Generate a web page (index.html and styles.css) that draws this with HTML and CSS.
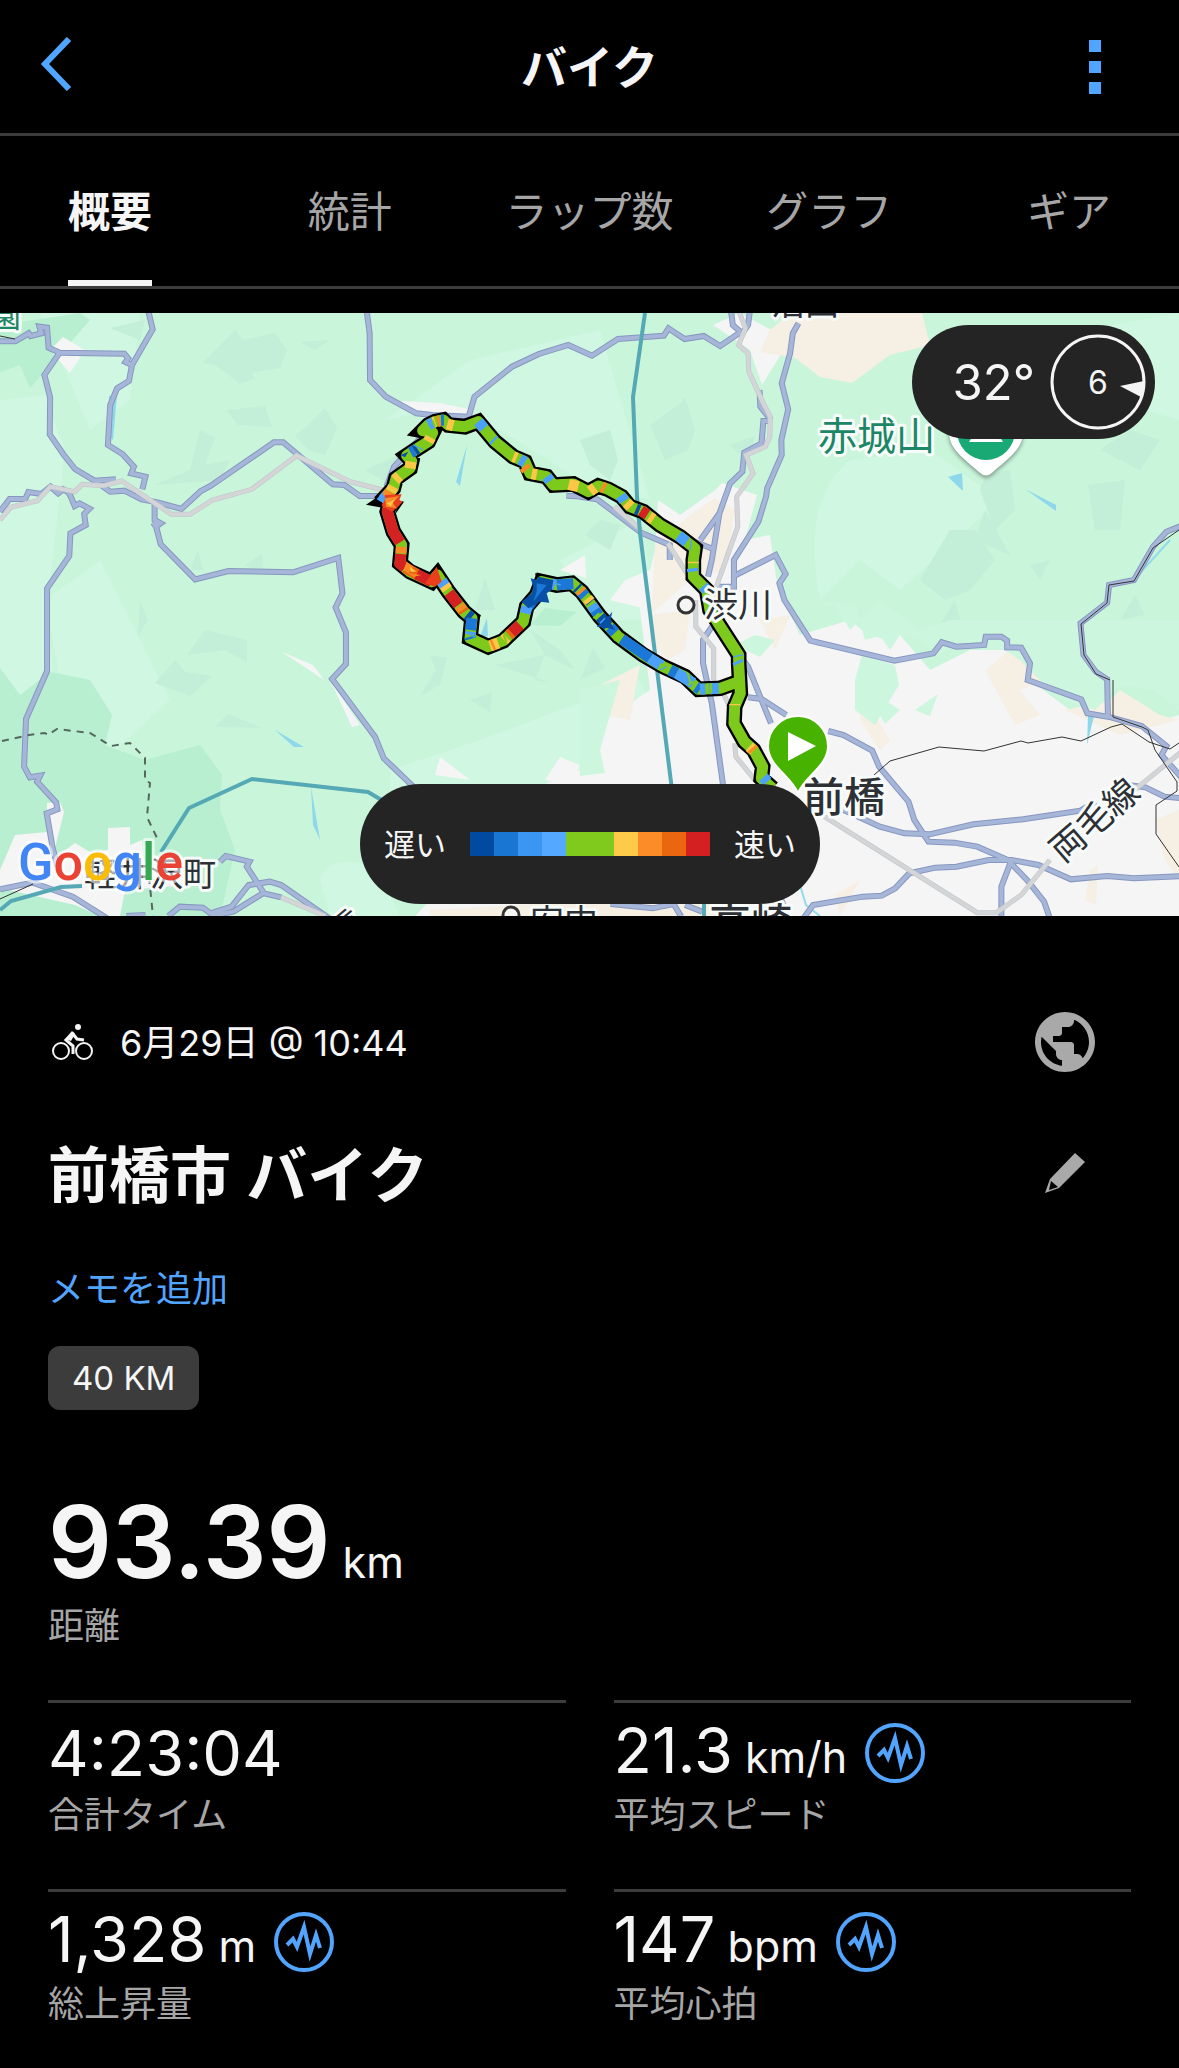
FILE: index.html
```html
<!DOCTYPE html>
<html lang="ja">
<head>
    <meta charset="UTF-8">
    <meta name="viewport" content="width=device-width, initial-scale=1.0">
    <title>バイク</title>
    <link rel="stylesheet" href="styles.css">
</head>
<body>
    <header class="top-bar">
        <button type="button" class="icon-button" aria-label="戻る">
            <svg width="32" height="54" viewBox="0 0 32 54"><path d="M29 2L5 27L29 52" fill="none" stroke="#52a5ff" stroke-width="6"/></svg>
        </button>
        <h1>バイク</h1>
        <button type="button" class="icon-button menu-button" aria-label="メニュー">
            <svg width="12" height="54" viewBox="0 0 12 54" fill="#52a5ff"><path d="M0 0h12v12H0zM0 21h12v12H0zM0 42h12v12H0z"/></svg>
        </button>
    </header>

    <nav class="tabs">
        <button type="button" class="tab active">概要</button>
        <button type="button" class="tab">統計</button>
        <button type="button" class="tab">ラップ数</button>
        <button type="button" class="tab">グラフ</button>
        <button type="button" class="tab">ギア</button>
    </nav>

    <!-- Map with the ride on it -->
    <section class="map">
        <svg class="map-canvas" viewBox="0 313 1179 603" preserveAspectRatio="xMidYMid slice">
            <defs>
                <g id="roads">
                    <g transform="translate(0 300) scale(.38265 .33333)">
                        <path d="M387 30L399 88 345 195 337 243 306 265 288 315 282 435 320 462 350 500 343 520 380 530 372 568"/>
                        <path d="M0 124L40 124 75 100 80 108 108 100 103 80 123 83 127 143 156 158 325 161 335 175 328 186 345 195"/>
                        <path d="M156 158L116 225 131 292 130 403 165 462 196 507 247 542 303 538"/>
                        <path d="M0 635L25 597 66 597 74 576 108 582 132 560 152 580 165 568 178 576 185 590 195 618 208 610 234 626 220 642 224 675 184 700 181 768 123 865 123 1113 68 1257 63 1400 78 1432 105 1427 97 1445 147 1508 150 1528 122 1540 137 1640 150 1700"/>
                        <path d="M247 542L288 575 325 572 370 598 415 608 474 627 525 573 550 558 716 427 740 427 870 553 900 555 940 588 990 588"/>
                        <path d="M404 610L404 660 420 670 410 678 400 668 408 680 420 733 510 838 597 813 766 817 884 774 895 880 877 922 904 997 904 1092 868 1137 980 1310 1003 1375 1085 1465"/>
                        <path d="M958 30L966 100 967 240 1008 290 1088 340 1130 345 1225 350 1240 290 1338 200 1408 162 1485 135 1547 167 1615 117 1735 107 1747 85 1789 117 1839 108 1882 138 1937 95"/>
                        <path d="M1110 400L1030 500 1010 560M1480 587L1560 592"/>
                    </g>
                    <g transform="translate(0 600) scale(.38265 .33333)">
                        <path d="M0 868L85 848 140 870 190 890 280 955M330 948L380 945M440 948L470 920 530 923 550 940 605 920 650 855 705 845 735 855 860 955M575 785L590 768 652 785 645 800 690 880 735 892M550 948L610 935 690 878"/>
                    </g>
                    <g transform="translate(580 300) scale(.38202 .33333)">
                        <path d="M395 30L400 75 420 95M445 30L440 75 425 100"/>
                        <path d="M572 70L557 100 550 160 528 250 545 328 527 420 528 465 490 565 487 590 467 665 403 780 403 860 360 860"/>
                        <path d="M502 363L480 363 475 430 430 458 425 515 393 550 365 640 315 720M365 640L345 780 335 830M470 270L472 320 500 360"/>
                        <path d="M403 828L512 765 538 822 522 850 535 900 603 1022 823 1082 925 1060 947 1027 985 1040 1058 1035 1062 1010 1103 1010 1118 1022 1118 1042 1155 1043 1178 1090 1172 1140 1312 1198 1328 1240 1390 1252 1470 1278 1535 1338 1522 1365 1580 1440"/>
                        <path d="M0 590L45 598 160 698 235 735 235 780M300 725L350 748"/>
                        <path d="M1580 675L1535 695 1500 740 1450 840 1385 855 1380 908 1310 970 1318 1065 1350 1115 1380 1138 1382 1250"/>
                    </g>
                    <g transform="translate(580 600) scale(.38202 .33333)">
                        <path d="M345 80L322 120 322 190 345 310 375 560M400 140L440 200 475 300 500 370M440 292L475 297 540 345"/>
                        <path d="M650 393L690 405 765 452 783 500 860 605 875 660 912 725 980 728 1040 740 1120 780 1170 840 1215 905 1230 955"/>
                        <path d="M690 630L785 680 850 700 915 703 1030 673 1160 658 1310 632 1350 605M1435 555L1480 562 1530 590 1580 595"/>
                        <path d="M585 955L610 915 740 890 790 887 825 865 862 820 930 803 985 800 1070 780 1130 780 1200 795 1285 838 1380 828 1450 835 1580 828M1128 785L1103 860 1103 955"/>
                        <path d="M80 912L190 925 245 912 265 950M520 880L545 950M275 915L320 935"/>
                    </g>
                </g>
                <g id="rails">
                    <g transform="translate(0 300) scale(.38265 .33333)">
                        <path d="M0 660L28 622 98 602 132 560 195 575 215 553 270 557 318 543 448 643 497 643 555 600 658 568 775 467 915 545 1000 570M735 1792L850 1848"/>
                    </g>
                    <g transform="translate(580 300) scale(.38202 .33333)">
                        <path d="M415 30L433 85 415 135 440 160 442 215 480 310 498 350 497 410 485 440 435 465 453 520 410 590 413 680 357 860M230 730L280 820M90 620L160 690"/>
                        <path d="M303 900L303 980 350 1045 350 1140M375 1180L400 1240M405 1330L408 1370 465 1450M640 1550L1040 1838 1090 1838 1155 1785 1230 1680M1430 1490L1580 1350"/>
                    </g>
                </g>
                <path id="route" d="M1238 1165L1204 1135 1208 1100 1181 1050 1153 1025 1122 970 1124 920 1141 880 1136 790 1136 765 1078 675 1050 630 1040 570 1000 530 1000 480 1005 445 960 410 900 375 850 335 810 320 785 290 745 268 715 258 685 275 640 252 580 255 560 230 510 220 495 185 460 170 405 125 355 65 315 80 265 75 250 60 225 65 205 75 188 92 218 98 205 125 165 150 140 167 155 183 150 205 108 235 100 265 75 292 90 308 82 335 100 395 125 435 120 490 150 515 215 545 232 525 265 575 312 635 336 655 330 715 385 740 430 722 490 665 500 620 530 585 545 545 590 555 635 550 665 575 720 650 775 710 850 765 910 800 975 830 1015 868 1080 865 1136 845"/>
            </defs>

            <!-- Land -->
            <rect y="313" width="1179" height="603" fill="#c9f5db"/>
            <g fill="#cff7e1">
                <path d="M0 400L45 395 65 450 48 600 60 780 0 730zM40 313H140L130 400 90 430 52 340zM45 600L100 560 170 700 105 760 100 720 60 680z"/>
                <path d="M385 420L470 360 600 330 650 500 580 480 500 430 440 410zM560 560L640 520 660 620 600 620zM390 770L480 740 640 680 690 790H390zM320 880Q330 850 380 870L400 916H330z"/>
                <path d="M820 600Q800 500 850 460L930 450 1000 500 900 590 860 560zM1080 330L1179 313V420L1110 400z"/>
            </g>
            <g fill="#b7efd0">
                <path d="M0 325L80 313 90 320 55 360 30 388 20 365 0 372zM0 668L20 695 50 672 90 680 112 715 105 745 145 760 200 745 222 775 220 810 235 850 220 916H0z"/>
                <path d="M530 625L545 608 577 612 560 626z"/>
            </g>
            <g fill="#c3eed7">
                <path d="M203 363L235 330 243 340 275 333 287 350 280 368 255 372 240 383 215 365zM225 372L240 360 255 378 240 384zM227 410L265 406 272 427 238 425zM295 435L305 428 325 408 337 428 325 455 308 450zM155 485L190 470 200 430 215 438 205 465 230 460 220 480zM365 470L410 450 400 490zM300 342L330 340 315 350zM110 328L145 320 140 340z"/>
                <path d="M140 600L148 620 138 635zM190 570L198 550 203 570zM245 565L262 554 263 575zM187 655L205 630 247 640 247 662 225 650zM155 683L175 660 185 672 212 676 190 696zM215 727L228 714 262 728zM475 610L485 578 495 610zM495 665L545 655 535 680 552 683zM430 655L447 658 440 685 420 696 436 670zM530 630L560 650 575 670 545 655zM470 700L492 692 490 712zM585 535L600 520 620 525 610 550z"/>
                <path d="M650 425L685 400 695 430 688 450 665 460zM580 440L610 430 618 460 610 480 590 465zM672 415L685 397 692 420zM730 445L755 436 748 462zM920 580L950 530 975 530 995 560 970 590 945 600zM975 540L985 510 1010 555zM1088 485L1125 480 1120 530 1095 530zM1100 450L1130 430 1160 440 1140 470zM985 475L1010 470 1015 510 995 530 980 490z"/>
                <path d="M940 625L955 600 960 620zM1120 620L1135 595 1145 615zM580 680L593 648 605 668zM1030 565L1050 560 1040 580z"/>
            </g>
            <g fill="#f5f5f5">
                <path d="M545 784L580 770 605 720 650 690 640 610 655 550 658 500 680 515 715 490 722 483 757 495 745 540 770 535 778 590 800 635 850 620 862 630 885 640 900 635 930 670 970 650 1005 650 1030 680 1070 710 1095 713 1130 730 1179 715V916H415L440 890z"/>
                <path d="M50 350L63 337 85 350 70 373zM400 401L440 403 473 410 465 420 425 420zM560 570L585 555 586 578zM282 652L313 665 324 680zM330 680L360 725 352 727zM435 775L440 757 470 780zM545 780L560 757 580 765 570 785zM713 325L740 313 790 340 762 385 750 350zM610 600L625 580 650 570 650 610z"/>
                <path d="M15 835L47 832 47 803 60 802 64 812 52 860 75 843 90 852 108 850V828L130 827V845L142 840 145 873 180 875 190 885 125 890 120 916H100L75 905 0 888V870z"/>
            </g>
            <g fill="#f5efe4">
                <path d="M770 330L790 313H922L930 345 890 355 852 383 820 377 795 358 760 352zM655 545L690 515 715 498 735 510 725 570 690 580 650 615 690 610 685 650 668 660 650 640zM590 690L640 665 630 720 605 715zM430 910L520 905 600 900 700 890 730 916H430z"/>
                <path d="M860 690L890 740 880 750 860 720zM985 670L1010 650 1045 680 1020 690 1040 715 1015 725zM1065 710L1110 700 1120 690 1160 715 1179 720 1120 735zM760 620L790 615 775 650zM1155 820L1179 810V880L1165 860zM1090 870L1098 865 1096 905 1085 900zM835 895L860 880 840 916z"/>
            </g>
            <g fill="#cdf6df">
                <path d="M862 655L895 665 899 685 875 725 855 710 855 680zM885 700L900 710 885 724 878 712zM915 710L938 694 930 716zM580 690L620 680 600 750 605 773 580 776zM735 645L755 635 775 640 760 657z"/>
                <path d="M790 600L835 605 850 630 880 600 920 630 950 620 1179 620 1179 710 1155 690 1120 685 1095 710 1060 700 1020 660 1005 650 970 650 960 640 940 655 920 640 900 635 890 650 880 636 865 640 855 605z"/>
            </g>
            <g fill="#8fd8ec">
                <path d="M467 445L460 486 456 482zM948 477L962 473 963 491zM1025 489L1056 505V511zM480 637L487 618 488 636zM275 730L304 747H294zM311 787L320 840 313 825zM109 396L117 395 113 440 109 436zM1088 716L1094 716 1087 745z"/>
            </g>
            <path d="M1170 540L1140 573M800 885L806 905 820 916" fill="none" stroke="#8fdcea" stroke-width="2"/>

            <!-- Roads and railways -->
            <use href="#roads" class="road-edge"/>
            <use href="#roads" class="road"/>
            <use href="#rails" class="rail-edge"/>
            <use href="#rails" class="rail"/>
            <g class="expressway">
                <path d="M645 313L633 397 637 497 640 533 672 790M704 904V916M161 852L189 808 252 779 368 792 390 805M0 910L11 901 61 887 82 886"/>
            </g>
            <path class="border-line" d="M2 741L29 735 45 733 48 735 57 729 90 733 111 746 130 743 145 758 145 780 150 783 147 817 157 838M149 877L153 916"/>
            <g class="thin-line">
                <path d="M874 775L890 761 939 747 984 751 1021 741 1028 743 1062 737 1081 741 1111 727 1122 724 1149 742 1170 749 1179 743M1113 680V717L1142 727 1148 730 1155 750 1177 782V791L1156 805V834L1179 867M1179 530L1153 548 1134 581 1109 585 1107 603 1081 624 1084 655 1096 674 1110 680M0 899L33 884M0 336L15 339"/>
            </g>

            <!-- Place names -->
            <g class="place">
                <text x="21" y="327" font-size="32" text-anchor="end" class="park">公園</text>
                <text x="771" y="315" font-size="34">沼田</text>
                <text x="818" y="450" font-size="39" class="park">赤城山</text>
                <text x="530" y="934" font-size="34">安中</text>
                <text x="709" y="939" font-size="42" class="city">高崎</text>
                <text x="84" y="886" font-size="33">軽井沢町</text>
                <text x="340" y="948" font-size="34" transform="rotate(-40 340 948)">信</text>
                <text x="1063" y="864" font-size="35" transform="rotate(-41 1063 864)">両毛線</text>
            </g>
            <circle cx="511" cy="915" r="8" class="town-dot"/>

            <!-- Ride, coloured by speed -->
            <g transform="translate(360 400) scale(.33333)" fill="none">
                <use href="#route" stroke="#000" stroke-width="47" stroke-linejoin="miter"/>
                <path d="M18 314L75 275 75 325zM110 300L132 305 108 340zM525 520L580 532 540 570zM215 510L225 500 235 540zM330 636L363 645 345 690zM167 92L215 60 195 105zM108 165L150 140 140 190z" fill="#000"/>
                <use href="#route" stroke="#7eca1c" stroke-width="33" stroke-linejoin="round"/>
                <g stroke-width="33">
                    <path stroke="#0750a5" d="M163 152L172 146M530 590L540 570M505 620L520 600M650 562L655 567M720 650L745 677M828 327L838 331M322 643L334 653M685 598L692 606"/>
                    <path stroke="#1c78d7" d="M152 158L163 152M590 554L640 551M660 572L675 588M705 630L715 645M750 682L765 698M785 717L870 775M336 655L331 690M330 710L332 717M243 61L252 61M512 607L502 620M930 810L950 820M1008 860L1020 868"/>
                    <path stroke="#4ba1fa" d="M205 75L220 67M355 65L372 85M480 178L495 187M560 230L570 243M782 287L793 303M955 407L980 426M997 505L998 515M1030 558L1040 570M70 298L82 285M245 542L255 558M332 695L331 703M575 551L585 554M496 640L501 620M695 615L705 630M870 775L905 797M950 820L1000 850M1020 868L1036 867M1048 866L1076 865M1132 783L1136 791M398 118L403 123M1210 1132L1222 1145"/>
                    <path stroke="#fcc646" d="M220 67L226 65M262 72L280 77M205 125L212 112M153 185L150 205M118 228L105 240M100 260L92 275M460 170L470 174M515 221L530 224M626 253L655 260M690 274L705 263M800 308L812 320M868 350L880 358M1000 485L1000 490M254 556L262 568M682 595L690 605M440 712L432 720M390 738L415 729M1124 912L1124 916M1168 1040L1181 1052"/>
                    <path stroke="#f98b26" d="M232 64L240 62M492 200L500 210M725 260L735 265M124 440L123 460M395 736L402 733M660 570L666 577M298 618L308 630M90 275L80 292M1175 1045L1181 1052"/>
                    <path stroke="#e9660f" d="M135 503L175 525M308 630L312 636M455 698L447 705"/>
                    <path stroke="#d42121" d="M84 325L82 335 100 395 120 427M122 462L120 490 135 503M170 523L215 545M267 578L295 615M455 698L480 675M843 332L862 344"/>
                    <path stroke="none" fill="#e93f1c" d="M75 285L125 283 118 300 128 305 110 325 95 335 65 318zM230 500L245 545 225 560 195 550z"/>
                    <path stroke="none" fill="#f98b26" d="M75 295L118 288 98 308 110 325 78 320zM140 485L160 500 145 520 185 525 160 530 130 510z"/>
                    <path stroke="none" fill="#fcc646" d="M80 310L105 298 92 320zM150 500L170 515 152 515z"/>
                    <path stroke="none" fill="#4ba1fa" d="M50 298L66 278 76 295 70 310z"/>
                    <path stroke="none" fill="#0750a5" d="M512 535L530 540 535 530 580 540 575 570 560 580 568 608 540 605 505 625 485 605 515 580 520 560zM757 635L750 665 765 690 745 685 710 680 740 655zM122 165L145 155 135 172z"/>
                    <path stroke="none" fill="#1c78d7" d="M530 550L560 555 540 580 520 605 530 575z"/>
                    <path stroke="#4ba1fa" stroke-width="4" d="M585 550L602 555M920 800L900 810M985 825L980 850M325 700L345 712M735 655L720 670M995 420L990 450M1120 770L1150 765M190 150L160 135"/>
                    <path stroke="#7eca1c" stroke-width="6" d="M218 62L225 80M905 790L895 810M983 820L992 850M1000 845L985 855M1043 850V880M1053 850V880M775 695L760 715M718 640L700 655M430 705L440 725M130 215L145 225"/>
                </g>
            </g>

            <g class="place">
                <text x="704" y="617" font-size="34">渋川</text>
                <text x="803" y="812" font-size="41" class="city">前橋</text>
            </g>
            <circle cx="686" cy="605" r="8" class="town-dot"/>

            <!-- Mountain pin -->
            <path class="peak-shadow" d="M949 432A37 37 0 0 1 1023 432C1023 450 1006 460 993 472Q986 479 979 472C966 460 949 450 949 432z" fill="#fff"/>
            <circle cx="986" cy="431" r="29" fill="#19a974"/>
            <path d="M986 415L1003 442H969z" fill="#fff"/>

            <!-- Start pin -->
            <path d="M798 793C790 775 768 766 768 746A30 30 0 0 1 828 746C828 766 806 775 798 793z" fill="#47b300" stroke="#fff" stroke-width="2"/>
            <path d="M788 732L816 746 788 761z" fill="#fff"/>

            <text x="18" y="880" class="google"><tspan fill="#4285f4">G</tspan><tspan fill="#ea4335">o</tspan><tspan fill="#fbbc05">o</tspan><tspan fill="#4285f4">g</tspan><tspan fill="#34a853">l</tspan><tspan fill="#ea4335">e</tspan></text>
        </svg>

        <div class="weather">
            <span class="temperature">32°</span>
            <div class="wind">
                <svg width="96" height="96" viewBox="0 0 96 96"><circle cx="48" cy="48" r="46" fill="none" stroke="#f5f5f5" stroke-width="3"/><path d="M70 52L94 47 91 63z" fill="#f5f5f5"/></svg>
                <span class="wind-speed">6</span>
            </div>
        </div>

        <div class="legend">
            <span>遅い</span>
            <div class="scale">
                <i class="speed-1"></i><i class="speed-2"></i><i class="speed-3"></i><i class="speed-4"></i><i class="speed-5"></i><i class="speed-5"></i><i class="speed-6"></i><i class="speed-7"></i><i class="speed-8"></i><i class="speed-9"></i>
            </div>
            <span>速い</span>
        </div>
    </section>

    <main>
        <div class="row date-row">
            <div class="date">
                <svg width="42" height="38" viewBox="0 0 42 38" fill="none" stroke="#f5f5f5">
                    <circle cx="9" cy="28" r="8" stroke-width="2"/>
                    <circle cx="32" cy="28" r="8" stroke-width="2"/>
                    <circle cx="26" cy="4" r="3" fill="#f5f5f5" stroke="none"/>
                    <path d="M21 31L21 23 14 17 21 11 25 16 32 17" stroke-width="3"/>
                    <path d="M13 16L20 8 23 11 19 18z" fill="#f5f5f5" stroke="none"/>
                </svg>
                <span>6月29日 @ 10:44</span>
            </div>
            <button type="button" class="icon-button" aria-label="公開設定">
                <svg width="60" height="60" viewBox="2 2 20 20" fill="#a9a9a9"><path d="M12 2C6.48 2 2 6.48 2 12s4.48 10 10 10 10-4.48 10-10S17.52 2 12 2zm-1 17.93c-3.95-.49-7-3.85-7-7.93 0-.62.08-1.21.21-1.79L9 15v1c0 1.1.9 2 2 2v1.93zm6.9-2.54c-.26-.81-1-1.39-1.9-1.39h-1v-3c0-.55-.45-1-1-1H8v-2h2c.55 0 1-.45 1-1V7h2c1.1 0 2-.9 2-2v-.41c2.93 1.19 5 4.06 5 7.41 0 2.08-.8 3.97-2.1 5.39z"/></svg>
            </button>
        </div>

        <div class="row title-row">
            <h2>前橋市 バイク</h2>
            <button type="button" class="icon-button" aria-label="編集">
                <svg width="60" height="60" viewBox="0 0 60 60" fill="#a9a9a9"><path fill-rule="evenodd" d="M40 10L50 19 24 45 10 50 15 36zM16 38L14 47 23 44z"/></svg>
            </button>
        </div>

        <a href="#" class="add-note">メモを追加</a>
        <div><span class="tag">40 KM</span></div>

        <div class="distance">
            <div class="distance-value"><strong>93.39</strong><span class="unit"> km</span></div>
            <div class="label">距離</div>
        </div>

        <div class="stats">
            <div class="stat">
                <div class="value">4:23:04</div>
                <div class="label">合計タイム</div>
            </div>
            <div class="stat">
                <div class="value"><span>21.3<span class="unit"> km/h</span></span>
                    <button type="button" class="icon-button" aria-label="平均スピードのグラフ"><svg width="60" height="60" viewBox="0 0 60 60" class="pulse"><circle cx="30" cy="30" r="28"/><path d="M13 33L19 27 23 35 30 15 36 42 42 23 46 36"/></svg></button>
                </div>
                <div class="label">平均スピード</div>
            </div>
            <div class="stat">
                <div class="value"><span>1,328<span class="unit"> m</span></span>
                    <button type="button" class="icon-button" aria-label="総上昇量のグラフ"><svg width="60" height="60" viewBox="0 0 60 60" class="pulse"><circle cx="30" cy="30" r="28"/><path d="M13 33L19 27 23 35 30 15 36 42 42 23 46 36"/></svg></button>
                </div>
                <div class="label">総上昇量</div>
            </div>
            <div class="stat">
                <div class="value"><span>147<span class="unit"> bpm</span></span>
                    <button type="button" class="icon-button" aria-label="平均心拍のグラフ"><svg width="60" height="60" viewBox="0 0 60 60" class="pulse"><circle cx="30" cy="30" r="28"/><path d="M13 33L19 27 23 35 30 15 36 42 42 23 46 36"/></svg></button>
                </div>
                <div class="label">平均心拍</div>
            </div>
        </div>
    </main>
</body>
</html>
```
FILE: styles.css
```css
* {
    box-sizing: border-box;
}

body {
    margin: 0;
    background-color: #000;
    color: #f5f5f5;
    font-family: Inter, "Noto Sans CJK JP", sans-serif;
}

svg {
    display: block;
}

button {
    background: none;
    border: none;
    padding: 0;
    color: inherit;
    font-family: inherit;
    cursor: pointer;
}

/* Top bar */
.top-bar {
    display: grid;
    grid-template-columns: 60px 1fr 60px;
    align-items: center;
    height: 136px;
    padding: 0 40px 6px;
    border-bottom: 3px solid #3c3c3c;
}

.top-bar h1 {
    margin: 0;
    font-size: 46px;
    font-weight: 600;
    text-align: center;
}

.menu-button {
    justify-self: end;
    padding-top: 6px;
    padding-right: 38px;
}

/* Tabs */
.tabs {
    display: grid;
    grid-template-columns: repeat(5, 84px);
    justify-content: space-between;
    height: 153px;
    padding: 0 68px;
    border-bottom: 3px solid #3c3c3c;
}

.tab {
    display: flex;
    justify-content: center;
    align-items: center;
    border-bottom: 6px solid transparent;
    color: #a6a6a6;
    font-size: 42px;
    white-space: nowrap;
}

.tab.active {
    border-bottom-color: #f5f5f5;
    color: #f5f5f5;
    font-weight: bold;
}

/* Map */
.map {
    position: relative;
    margin-top: 24px;
}

.map-canvas {
    width: 100%;
    height: 603px;
}

#roads path,
#rails path {
    fill: none;
    vector-effect: non-scaling-stroke;
}

.road-edge {
    stroke: #8797c0;
    stroke-width: 6px;
}

.road {
    stroke: #a6b6d9;
    stroke-width: 4px;
}

.rail-edge {
    stroke: #bfc4c8;
    stroke-width: 5px;
}

.rail {
    stroke: #d3d5d7;
    stroke-width: 4px;
}

.expressway {
    fill: none;
    stroke: #54a9b4;
    stroke-width: 4px;
}

.border-line {
    fill: none;
    stroke: #54685d;
    stroke-width: 2px;
    stroke-dasharray: 7 6;
}

.thin-line {
    fill: none;
    stroke: #333;
    stroke-width: 1px;
}

.place {
    fill: #2d3035;
    stroke: #f7fbf9;
    stroke-width: 6px;
    stroke-linejoin: round;
    paint-order: stroke;
}

.place .park {
    fill: #1c8666;
}

.place .city {
    font-weight: 500;
}

.town-dot {
    fill: #f5f5f5;
    stroke: #333;
    stroke-width: 3px;
}

.peak-shadow {
    filter: drop-shadow(0 2px 2px rgba(0, 0, 0, 0.4));
}

.google {
    font-family: Roboto, sans-serif;
    font-size: 52px;
    font-weight: 500;
    stroke: rgba(255, 255, 255, 0.6);
    stroke-width: 6px;
    stroke-linejoin: round;
    paint-order: stroke;
}

.weather {
    position: absolute;
    top: 12px;
    right: 24px;
    display: flex;
    align-items: center;
    gap: 15px;
    height: 114px;
    padding: 0 9px 0 41px;
    border-radius: 57px;
    background-color: #242424;
}

.temperature {
    font-size: 49px;
}

.wind {
    display: grid;
    place-items: center;
}

.wind svg,
.wind-speed {
    grid-area: 1 / 1;
}

.wind-speed {
    font-size: 32px;
}

.legend {
    position: absolute;
    bottom: 12px;
    left: 360px;
    display: flex;
    align-items: center;
    gap: 24px;
    height: 120px;
    padding: 0 24px;
    border-radius: 60px;
    background-color: #242424;
    font-size: 31px;
}

.legend span {
    padding-bottom: 4px;
}

.scale {
    display: flex;
}

.scale i {
    width: 24px;
    height: 24px;
}

.speed-1 { background-color: #004a9f; }
.speed-2 { background-color: #1976d2; }
.speed-3 { background-color: #3b95f2; }
.speed-4 { background-color: #55a8ff; }
.speed-5 { background-color: #7fca1c; }
.speed-6 { background-color: #fdca4a; }
.speed-7 { background-color: #fb8c27; }
.speed-8 { background-color: #ea670f; }
.speed-9 { background-color: #d52022; }

/* Activity details */
main {
    padding: 96px 48px 40px;
}

.row {
    display: flex;
    justify-content: space-between;
    align-items: center;
    padding-right: 36px;
}

.date {
    display: flex;
    align-items: center;
    gap: 26px;
    padding-left: 4px;
    font-size: 36px;
}

.date span {
    padding-bottom: 4px;
}

.title-row {
    margin-top: 56px;
    height: 90px;
}

.title-row h2 {
    margin: 0;
    padding-bottom: 4px;
    font-size: 61px;
    font-weight: 600;
}

.add-note {
    display: block;
    margin-top: 43px;
    color: #52a5ff;
    font-size: 36px;
    line-height: 56px;
    text-decoration: none;
}

.tag {
    display: inline-block;
    margin-top: 29px;
    padding: 0 24px;
    border-radius: 12px;
    background-color: #3c3c3c;
    font-size: 33px;
    line-height: 64px;
}

.distance {
    margin-top: 72px;
}

.distance-value {
    height: 120px;
    line-height: 120px;
}

.distance-value strong {
    font-size: 100px;
    font-weight: 600;
}

.unit {
    font-size: 43px;
}

.label {
    color: #a6a6a6;
    font-size: 36px;
    line-height: 48px;
}

.stats {
    display: grid;
    grid-template-columns: 1fr 1fr;
    column-gap: 48px;
    margin-top: 50px;
}

.stat {
    height: 189px;
    padding-top: 12px;
    border-top: 3px solid #3c3c3c;
}

.value {
    display: flex;
    align-items: center;
    gap: 18px;
    height: 76px;
    font-size: 63px;
    line-height: 76px;
}

.pulse {
    fill: none;
    stroke: #52a5ff;
    stroke-width: 4px;
}
```
